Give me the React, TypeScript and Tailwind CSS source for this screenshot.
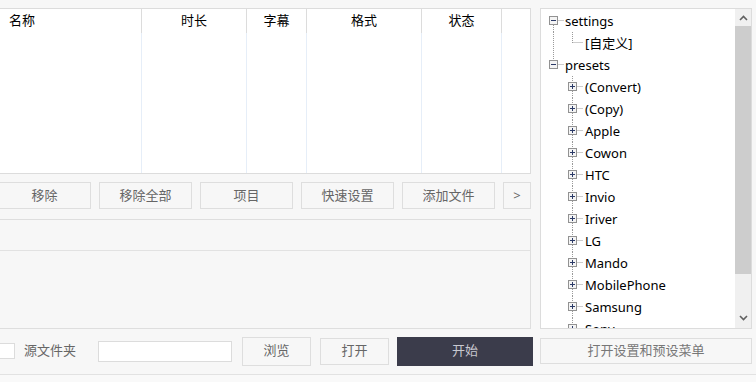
import React from "react";

const font = "font-['Noto_Sans','Noto_Sans_CJK_SC',sans-serif]";

const columns = [
  { label: "名称", w: "w-[143px]", align: "justify-start pl-[10px]" },
  { label: "时长", w: "w-[105px]", align: "justify-center" },
  { label: "字幕", w: "w-[60px]", align: "justify-center" },
  { label: "格式", w: "w-[115px]", align: "justify-center" },
  { label: "状态", w: "w-[80px]", align: "justify-center" },
  { label: "", w: "flex-1", align: "justify-center" },
];

const actions = ["移除", "移除全部", "项目", "快速设置", "添加文件"];

const presets = [
  "(Convert)",
  "(Copy)",
  "Apple",
  "Cowon",
  "HTC",
  "Invio",
  "Iriver",
  "LG",
  "Mando",
  "MobilePhone",
  "Samsung",
  "Sony",
];

// box with + or - sign, drawn in a small svg
const Expander = ({ open, x }: { open: boolean; x: number }) => (
  <g>
    <rect x={x + 0.5} y={6.5} width={8} height={8} fill="#f4f4f4" stroke="#929292" />
    <line x1={x + 2} y1={10.5} x2={x + 7} y2={10.5} stroke="#2b3a67" />
    {!open && <line x1={x + 4.5} y1={8} x2={x + 4.5} y2={13} stroke="#2b3a67" />}
  </g>
);

const dot = { stroke: "#9a9a9a", strokeDasharray: "1 1" };

const TreeRow = ({
  level,
  label,
  kind,
  up,
  down,
  rail,
}: {
  level: 0 | 1;
  label: string;
  kind: "open" | "closed" | "leaf";
  up: boolean;
  down: boolean;
  rail?: boolean;
}) => {
  const cx = level === 0 ? 12.5 : 31.5;
  const boxX = cx - 4.5;
  const width = level === 0 ? 24 : 43;
  return (
    <div className="flex h-[22px] items-center">
      <svg width={width} height={22} className="shrink-0">
        {rail && <line x1={12.5} y1={0} x2={12.5} y2={22} {...dot} />}
        {up && <line x1={cx} y1={0} x2={cx} y2={kind === "leaf" ? 11 : 6} {...dot} />}
        {down && <line x1={cx} y1={kind === "leaf" ? 11 : 15} x2={cx} y2={22} {...dot} />}
        {kind === "leaf" ? (
          <line x1={cx} y1={10.5} x2={width - 1} y2={10.5} {...dot} />
        ) : (
          <>
            <line x1={cx + 5} y1={10.5} x2={width - 1} y2={10.5} {...dot} />
            <Expander open={kind === "open"} x={boxX} />
          </>
        )}
      </svg>
      <span className={`text-[13px] leading-none text-black whitespace-nowrap ${level === 1 ? "ml-[1px]" : ""}`}>
        {label}
      </span>
    </div>
  );
};

const Chevron = ({ down }: { down?: boolean }) => (
  <svg width="9" height="6" viewBox="0 0 9 6">
    <path
      d={down ? "M1 1 L4.5 4.5 L8 1" : "M1 5 L4.5 1.5 L8 5"}
      fill="none"
      stroke="#606060"
      strokeWidth="1.6"
    />
  </svg>
);

export default function App() {
  return (
    <div className={`w-[756px] h-[382px] overflow-hidden bg-[#f7f7f7] ${font}`}>
      <div className="flex pt-2">
        {/* left side */}
        <div className="ml-[-2px] w-[533px] shrink-0 flex flex-col">
          {/* file table */}
          <div className="h-[166px] border border-[#dcdcdc] bg-white flex">
            {columns.map((c, i) => (
              <div key={i} className={`${c.w} flex flex-col`}>
                <div
                  className={`h-[24px] flex items-center ${c.align} text-[13px] text-black ${i < columns.length - 1 ? "border-r border-[#dcdcdc]" : ""}`}
                >
                  {c.label}
                </div>
                <div className={`flex-1 ${i < columns.length - 1 ? "border-r border-[#e6eef8]" : ""}`} />
              </div>
            ))}
          </div>

          {/* action buttons */}
          <div className="mt-2 flex gap-2">
            {actions.map((a) => (
              <div
                key={a}
                className="w-[93px] h-[27px] border border-[#dedede] bg-[#f7f7f7] flex items-center justify-center text-[13px] text-[#666]"
              >
                {a}
              </div>
            ))}
            <div className="w-[28px] h-[27px] border border-[#dedede] bg-[#f7f7f7] flex items-center justify-center text-[13px] text-[#666]">
              &gt;
            </div>
          </div>

          {/* log panel */}
          <div className="mt-[10px] h-[110px] border border-[#dedede] flex flex-col">
            <div className="h-[31px] border-b border-[#e2e2e2]" />
            <div className="flex-1" />
          </div>
        </div>

        {/* preset tree */}
        <div className="ml-[9px] w-[212px] h-[321px] shrink-0 border border-[#dcdcdc] bg-white flex">
          <div className="flex-1 overflow-hidden pt-[1px]">
            <TreeRow level={0} label="settings" kind="open" up={false} down />
            <TreeRow level={1} label="[自定义]" kind="leaf" up down={false} rail />
            <TreeRow level={0} label="presets" kind="open" up down={false} />
            {presets.map((p, i) => (
              <TreeRow
                key={p}
                level={1}
                label={p}
                kind="closed"
                up
                down={i < presets.length - 1}
              />
            ))}
          </div>
          <div className="w-[16px] bg-[#f0f0f0] flex flex-col">
            <div className="h-[17px] flex items-center justify-center">
              <Chevron />
            </div>
            <div className="h-[248px] bg-[#cdcdcd]" />
            <div className="flex-1 flex items-end justify-center pb-[7px]">
              <Chevron down />
            </div>
          </div>
        </div>
      </div>

      {/* bottom controls */}
      <div className="mt-[7px] h-[30px] flex items-center ml-[-2px]">
        <div className="ml-[1px] w-[16px] h-[16px] border border-[#dcdcdc] bg-white" />
        <span className="ml-[9px] text-[13px] text-[#666]">源文件夹</span>
        <div className="ml-[22px] w-[134px] h-[21px] border border-[#dcdcdc] bg-white" />
        <div className="ml-[10px] w-[69px] h-[29px] border border-[#dedede] bg-[#f7f7f7] flex items-center justify-center text-[13px] text-[#666]">
          浏览
        </div>
        <div className="ml-[9px] w-[69px] h-[27px] border border-[#dedede] bg-[#f7f7f7] flex items-center justify-center text-[13px] text-[#666]">
          打开
        </div>
        <div className="ml-[8px] w-[136px] h-[29px] bg-[#3b3c4b] flex items-center justify-center text-[13px] text-[#c8c8d0]">
          开始
        </div>
        <div className="ml-[7px] w-[212px] h-[26px] border border-[#dedede] bg-[#f7f7f7] flex items-center justify-center text-[13px] text-[#777]">
          打开设置和预设菜单
        </div>
      </div>

      <div className="mt-[8px] h-[20px] border-t border-[#e2e2e2] bg-[#f9f9f9]" />
    </div>
  );
}
